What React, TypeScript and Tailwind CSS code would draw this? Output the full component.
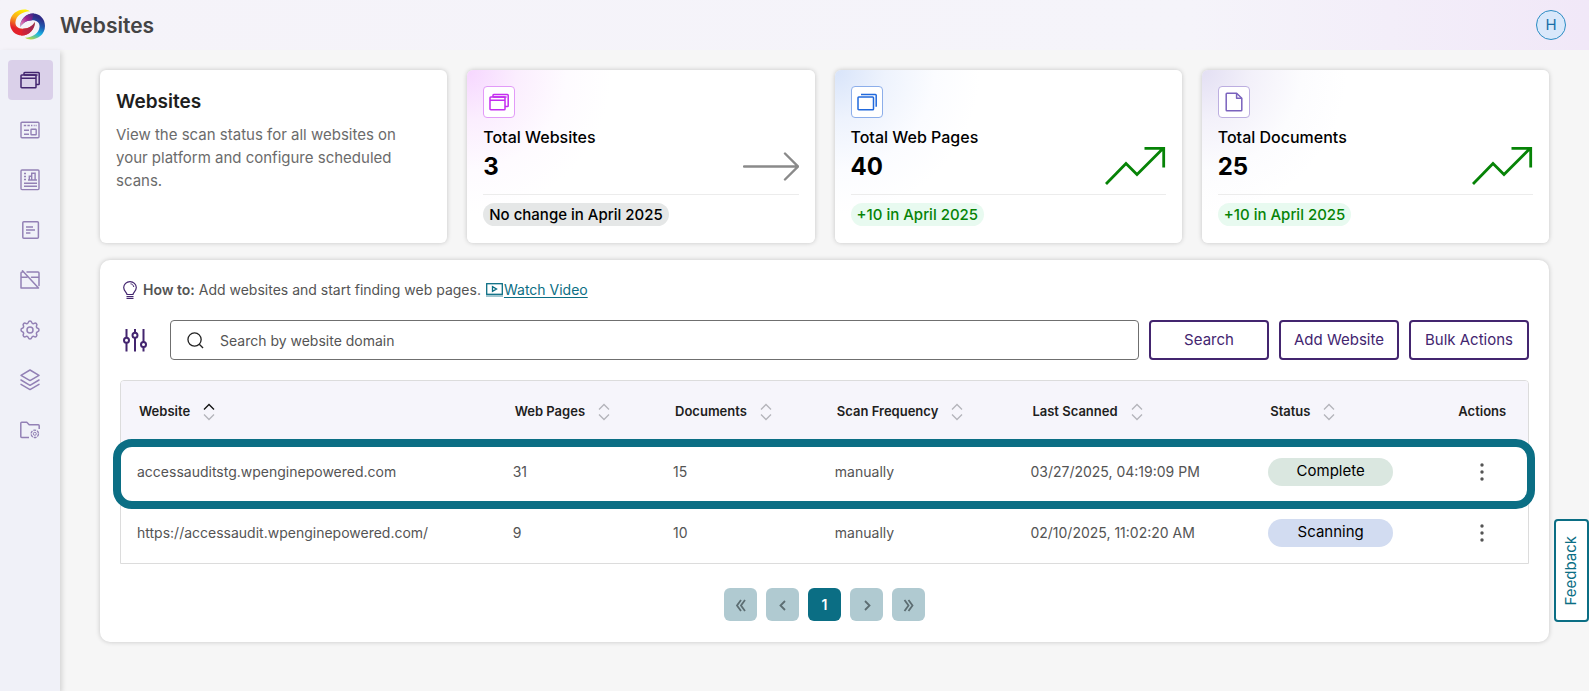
import React, { useState } from 'react';
import { TbSettings } from 'react-icons/tb';

interface IconProps {
  size?: number;
}

const WindowsIcon: React.FC<IconProps> = ({ size = 20 }) => (
  <svg width={size} height={size} viewBox="0 0 20 20" fill="none" stroke="currentColor" strokeWidth="1.5" strokeLinejoin="round">
    <rect x="1" y="5" width="15" height="12.7" rx="0.8" />
    <path d="M1 8.3h15M4 5V3.3c0-.5.3-.8.8-.8h13.6c.5 0 .8.3.8.8v10.5c0 .5-.3.8-.8.8H16M4.2 5h13.4" />
  </svg>
);

const PagesIcon: React.FC<IconProps> = ({ size = 20 }) => (
  <svg width={size} height={size} viewBox="0 0 20 20" fill="none" stroke="currentColor" strokeWidth="1.5" strokeLinejoin="round">
    <rect x="1" y="5" width="15.5" height="12.8" rx="0.8" />
    <path d="M4 2.4h14.4c.5 0 .8.3.8.8v11.6" />
  </svg>
);

const DocIcon: React.FC<IconProps> = ({ size = 20 }) => (
  <svg width={size} height={size} viewBox="0 0 20 20" fill="none" stroke="currentColor" strokeWidth="1.5" strokeLinejoin="round">
    <path d="M3 1.2h9.6l5.2 5V18c0 .4-.3.8-.8.8H3c-.5 0-.8-.4-.8-.8V2c0-.5.3-.8.8-.8z" />
    <path d="M12.6 1.2v5h5" />
  </svg>
);

const LayoutIcon = () => (
  <svg width="20" height="20" viewBox="0 0 20 20" fill="none" stroke="currentColor" strokeWidth="1.4">
    <rect x="1" y="2.2" width="18" height="15.6" rx="1" />
    <path d="M3.8 5.500h2.400M7.400 5.500h2.400M11 5.500h1.400M13.700 5.500h1M15.600 5.500h1M4 10.300h5M4 14.200h5" />
    <rect x="11" y="9.2" width="5.2" height="5.6" rx="0.5" />
  </svg>
);

const ReportIcon = () => (
  <svg width="20" height="22" viewBox="0 0 20 22" fill="none" stroke="currentColor" strokeWidth="1.4">
    <rect x="1" y="1" width="18" height="19.6" rx="1" />
    <path d="M4 4.500h2M4 7.500h2M4 10.500h2M8 11h9M9.300 11V7.300h2.400V11M11.700 11V4.300h3.400V11M4 14.200h13M4 17.200h13" />
  </svg>
);

const NoteIcon = () => (
  <svg width="20" height="20" viewBox="0 0 20 20" fill="none" stroke="currentColor" strokeWidth="1.5">
    <rect x="2.8" y="1.7" width="15.6" height="16.6" rx="1" />
    <path d="M6 7h7M6 10h9M6 13h4.400" />
  </svg>
);

const BlockedIcon = () => (
  <svg width="20" height="20" viewBox="0 0 20 20" fill="none" stroke="currentColor" strokeWidth="1.5" strokeLinejoin="round" strokeLinecap="round">
    <path d="M7 2H18c.6 0 1 .4 1 1v12.500M3.500 2H2c-.6 0-1 .4-1 1V18h17M1 7.300h6M11.500 7.300H19M2.500.8L18.500 18" />
  </svg>
);

const LayersIcon = () => (
  <svg width="20" height="22" viewBox="0 0 20 22" fill="none" stroke="currentColor" strokeWidth="1.5" strokeLinejoin="round" strokeLinecap="round">
    <path d="M10 1l9 5.300-9 5.300-9-5.300z" />
    <path d="M1 11l9 5.300 9-5.300M1 15.300l9 5.300 9-5.300" />
  </svg>
);

const FolderIcon = () => (
  <svg width="20" height="20" viewBox="0 0 20 20" fill="none" stroke="currentColor" strokeWidth="1.5" strokeLinejoin="round">
    <path d="M9 17.500H1.700c-.5 0-.9-.4-.9-.9V3.200c0-.5.4-.9.9-.9h5.100l2.400 2.500h9.100c.5 0 .9.4.9.9V9" />
    <circle cx="14.8" cy="13.8" r="3.7" strokeWidth="1.3" strokeDasharray="2.9 .97" />
    <circle cx="14.8" cy="13.8" r="1.5" strokeWidth="1" />
  </svg>
);

const Logo = () => (
  <svg width="35" height="32" viewBox="0 0 35 32" fill="none">
    <defs>
      <linearGradient id="warm" x1="20" y1="0" x2="10" y2="27" gradientUnits="userSpaceOnUse">
        <stop offset="0.1" stopColor="#fff200" />
        <stop offset="0.45" stopColor="#fba919" />
        <stop offset="0.8" stopColor="#e3222b" />
      </linearGradient>
      <linearGradient id="cool" x1="27" y1="5" x2="17" y2="31" gradientUnits="userSpaceOnUse">
        <stop offset="0.1" stopColor="#2e2a86" />
        <stop offset="0.4" stopColor="#1e5fb4" />
        <stop offset="0.65" stopColor="#18b5e4" />
        <stop offset="1" stopColor="#d9e021" />
      </linearGradient>
      <linearGradient id="plum" x1="10" y1="17" x2="25" y2="5" gradientUnits="userSpaceOnUse">
        <stop offset="0" stopColor="#f49ac1" />
        <stop offset="0.5" stopColor="#a3238e" />
        <stop offset="1" stopColor="#2e2a86" />
      </linearGradient>
      <linearGradient id="wine" x1="10" y1="26" x2="25" y2="15" gradientUnits="userSpaceOnUse">
        <stop offset="0" stopColor="#e3222b" />
        <stop offset="1" stopColor="#8e2a5e" />
      </linearGradient>
    </defs>
    <path d="M20 2.200C14-2 0 2 0 14c0 7 5 12.500 12 12.500 7 0 13-6 13-13.500-3 4.500-7 6.500-12 6.800-5 .2-8-2.800-7.500-6.800C6 7 12 2.500 20 2.200z" fill="url(#warm)" />
    <path d="M11 26.500C19 27 25 20 25 13c-3 4.500-7 6.500-12 6.800z" fill="url(#wine)" />
    <path d="M15 28.800c6 4.200 20 .2 20-11.800 0-7-5-12.500-12-12.500-7 0-13 6-13 13.500 3-4.500 7-6.500 12-6.800 5-.2 8 2.800 7.500 6.800-.5 6-6.500 10.500-14.500 10.800z" fill="url(#cool)" />
    <path d="M24 4.500C16 4 10 11 10 18c3-4.500 7-6.500 12-6.800z" fill="url(#plum)" />
  </svg>
);

const SortIcon: React.FC<{ active?: boolean }> = ({ active }) => (
  <svg width="12" height="18" viewBox="0 0 12 18" fill="none" strokeWidth="1.3">
    <path d="M1 6.500L6 1.500l5 5" stroke={active ? '#111111' : '#b4b4ba'} />
    <path d="M1 11.500l5 5 5-5" stroke="#b4b4ba" />
  </svg>
);

const FlatArrow = () => (
  <svg width="56" height="40" viewBox="0 0 56 40" fill="none" stroke="#8a8a8a" strokeWidth="2.4" strokeLinecap="round">
    <path d="M1 21.500h53M42 8.500l13 13-13 13" />
  </svg>
);

const UpArrow = () => (
  <svg width="61" height="40" viewBox="0 0 61 40" fill="none" stroke="#068306" strokeWidth="2.8">
    <path d="M1 39L21 18.500 32 29.500 58 3.500M39.500 3.300H58.700V22.500" />
  </svg>
);

const NAV = [
  { label: 'Websites', icon: <WindowsIcon /> },
  { label: 'Web pages', icon: <LayoutIcon /> },
  { label: 'Reports', icon: <ReportIcon /> },
  { label: 'Documents', icon: <NoteIcon /> },
  { label: 'Excluded pages', icon: <BlockedIcon /> },
  { label: 'Settings', icon: <TbSettings size={24} strokeWidth={1.5} /> },
  { label: 'Templates', icon: <LayersIcon /> },
  { label: 'Folder settings', icon: <FolderIcon /> },
];

const STATS = [
  {
    title: 'Total Websites',
    value: 3,
    change: 'No change in April 2025',
    up: false,
    glow: 'bg-[radial-gradient(circle_at_top_left,#f6d6ff_0%,#fbeefe_50px,#fefbff_100px,#ffffff_145px)]',
    tile: 'border-[#e29bf8] text-[#c42df0]',
    icon: <WindowsIcon />,
  },
  {
    title: 'Total Web Pages',
    value: 40,
    change: '+10 in April 2025',
    up: true,
    glow: 'bg-[radial-gradient(circle_at_top_left,#d8e4fa_0%,#eef3fd_50px,#fbfcff_100px,#ffffff_145px)]',
    tile: 'border-[#8caeea] text-[#2169dc]',
    icon: <PagesIcon />,
  },
  {
    title: 'Total Documents',
    value: 25,
    change: '+10 in April 2025',
    up: true,
    glow: 'bg-[radial-gradient(circle_at_top_left,#e3dff3_0%,#f3f1fa_50px,#fcfcfe_100px,#ffffff_145px)]',
    tile: 'border-[#bcaee0] text-[#7a62bd]',
    icon: <DocIcon />,
  },
];

const COLUMNS = [
  { label: 'Website', width: 'w-[26.7%]' },
  { label: 'Web Pages', width: 'w-[11.4%]' },
  { label: 'Documents', width: 'w-[11.5%]' },
  { label: 'Scan Frequency', width: 'w-[13.9%]' },
  { label: 'Last Scanned', width: 'w-[16.9%]' },
  { label: 'Status', width: 'w-[13.1%]' },
];

const ROWS = [
  { site: 'accessauditstg.wpenginepowered.com', pages: 31, docs: 15, freq: 'manually', scanned: '03/27/2025, 04:19:09 PM', status: 'Complete' },
  { site: 'https://accessaudit.wpenginepowered.com/', pages: 9, docs: 10, freq: 'manually', scanned: '02/10/2025, 11:02:20 AM', status: 'Scanning' },
];

const PAGER = [
  { label: 'First page', path: 'M8 2.500L4 8l4 5.500M12 2.500L8 8l4 5.500' },
  { label: 'Previous page', path: 'M10 3.500L5.500 8l4.500 4.500' },
  { label: 'Page 1', path: '' },
  { label: 'Next page', path: 'M6 3.500L10.500 8 6 12.500' },
  { label: 'Last page', path: 'M3.500 2.500l4 5.500-4 5.500M7.500 2.500l4 5.500-4 5.500' },
];

const App: React.FC = () => {
  const [query, setQuery] = useState('');

  return (
    <div className="min-h-screen flex flex-col bg-[#f6f6f6] font-['Inter',sans-serif] text-[#545454]">
      <header className="h-[50px] flex items-center justify-between pl-[10px] pr-[23px] bg-linear-to-r from-[#f5f3f9] via-[#f5f4fa] via-75% to-[#f1e8f8]">
        <div className="flex items-center gap-[15px]">
          <Logo />
          <h1 className="pt-px text-[21px] font-semibold text-[#444444]">Websites</h1>
        </div>
        <button aria-label="Account" className="w-[30px] h-[30px] rounded-full border border-[#2b8cc4] bg-[#d9e8fb] text-[#1a6fa8] text-[15px]">H</button>
      </header>

      <div className="flex flex-grow">
        <nav className="w-[60px] shrink-0 flex flex-col gap-[10px] pt-[10px] pl-2 bg-[#f0f1f8] shadow-[2px_2px_5px_rgba(0,0,0,0.14)]">
          {NAV.map((item, i) => (
            <a
              key={item.label}
              href="#"
              aria-label={item.label}
              className={`w-[45px] h-10 pr-[2px] rounded flex items-center justify-center ${i === 0 ? 'bg-[#dad0e9] text-[#43256f]' : 'text-[#9381b5]'}`}
            >
              {item.icon}
            </a>
          ))}
        </nav>

        <main className="flex-grow min-w-0 px-10 pt-5 pb-12">
          <div className="grid grid-cols-4 gap-5">
            <section className="h-[173px] rounded-md bg-white p-4 shadow-[0_0_5px_rgba(0,0,0,0.2)]">
              <h2 className="text-[19px] leading-8 font-semibold text-[#1e1e1e]">Websites</h2>
              <p className="mt-[5px] text-[15px] leading-[23px] text-[#6b6b6b]">
                View the scan status for all websites on your platform and configure scheduled scans.
              </p>
            </section>

            {STATS.map(s => (
              <section key={s.title} className={`h-[173px] rounded-md p-4 shadow-[0_0_5px_rgba(0,0,0,0.2)] ${s.glow}`}>
                <div className={`w-8 h-8 rounded border bg-white flex items-center justify-center ${s.tile}`}>{s.icon}</div>
                <div className="flex justify-between items-end pb-[9px] border-b border-[#ececec]">
                  <div className="text-black">
                    <h3 className="mt-[7px] text-[16px] leading-6 font-medium">{s.title}</h3>
                    <p className="text-[24px] leading-9 font-bold">{s.value}</p>
                  </div>
                  {s.up ? <UpArrow /> : <FlatArrow />}
                </div>
                <span className={`mt-2 inline-block rounded-full px-[6px] text-[15px] leading-[23px] font-medium ${s.up ? 'bg-[#e8faf0] text-[#068306]' : 'bg-[#e5e7e7] text-black'}`}>
                  {s.change}
                </span>
              </section>
            ))}
          </div>

          <section className="mt-[17px] rounded-[10px] bg-white px-5 pt-5 pb-[21px] shadow-[0_0_5px_rgba(0,0,0,0.2)]">
            <div className="flex items-center h-5 pl-[3px] text-[14px] leading-5">
              <svg width="14" height="18" viewBox="0 0 14 18" fill="none" stroke="#43256f" strokeWidth="1.2">
                <path d="M4 13.500c0-2-3.300-3.200-3.300-6.900a6.300 6 0 0 1 12.600 0c0 3.700-3.300 4.900-3.300 6.900zM3.500 15.500h7M3.500 17.300h7" />
                <path d="M7.500 2.800c1.800.2 3 1.400 3.300 3.200" strokeWidth="1" />
              </svg>
              <span className="ml-[6px]"><b className="font-semibold">How to:</b> Add websites and start finding web pages.</span>
              <a href="#" className="ml-[5px] flex items-center gap-px text-[#0b6e84]">
                <svg width="17" height="14" viewBox="0 0 17 14" fill="none" stroke="currentColor" strokeWidth="1.3">
                  <rect x="0.7" y="0.7" width="15.6" height="10.6" />
                  <path d="M6.500 3.700v4.600L10.500 6z" />
                  <path d="M0 13h17" strokeOpacity="0.6" />
                </svg>
                <span className="underline underline-offset-2">Watch Video</span>
              </a>
            </div>

            <form className="mt-5 flex items-center gap-[10px]" onSubmit={e => e.preventDefault()}>
              <button type="button" aria-label="Filters" className="w-10 h-10 pl-[3px]">
                <svg width="24" height="24" viewBox="0 0 24 24" fill="none" stroke="#43256f" strokeWidth="2">
                  <path d="M3.500 1v8.500M3.500 15v8.500M12 1v3.500M12 10v13.500M20.500 1v13M20.500 19v4.500" />
                  <circle cx="3.5" cy="12.3" r="2.5" />
                  <circle cx="12" cy="7.3" r="2.5" />
                  <circle cx="20.5" cy="16.5" r="2.5" />
                </svg>
              </button>
              <label className="flex-grow h-10 flex items-center rounded border border-[#6f6f6f] pl-4">
                <svg width="17" height="17" viewBox="0 0 18 18" fill="none" stroke="#222222" strokeWidth="1.4">
                  <circle cx="8" cy="8" r="7" />
                  <path d="M13 13l4 4" />
                </svg>
                <input
                  aria-label="Search by website domain"
                  value={query}
                  onChange={e => setQuery(e.target.value)}
                  placeholder="Search by website domain"
                  className="flex-grow ml-4 text-[14px] outline-none placeholder:text-[#545454]"
                />
              </label>
              {['Search', 'Add Website', 'Bulk Actions'].map(label => (
                <button key={label} type="button" className="w-[120px] h-10 shrink-0 rounded border-2 border-[#43256f] text-[15px] text-[#43256f]">
                  {label}
                </button>
              ))}
            </form>

            <div className="relative mt-5">
              <div className="rounded-t border border-[#dcdcdc] overflow-hidden">
                <table className="w-full table-fixed text-left text-[14px]">
                  <thead>
                    <tr className="h-[60px] bg-[#f6f5fb] text-[13px] text-[#1e1e1e]">
                      {COLUMNS.map((c, i) => (
                        <th key={c.label} className={`pl-[18px] pt-[2px] font-semibold ${c.width}`}>
                          <button className="flex items-center gap-[13px]">
                            {c.label}
                            <SortIcon active={i === 0} />
                          </button>
                        </th>
                      ))}
                      <th className="pt-[2px] text-center font-semibold">Actions</th>
                    </tr>
                  </thead>
                  <tbody>
                    {ROWS.map(r => (
                      <tr key={r.site} className="h-[61px]">
                        <td className="pl-4">{r.site}</td>
                        <td className="pl-4">{r.pages}</td>
                        <td className="pl-4">{r.docs}</td>
                        <td className="pl-4">{r.freq}</td>
                        <td className="pl-4">{r.scanned}</td>
                        <td className="pl-4">
                          <span className={`block w-[125px] h-7 rounded-full text-center text-[15px] leading-[26px] text-black ${r.status === 'Complete' ? 'bg-[#dae7e0]' : 'bg-[#d2dcf1]'}`}>
                            {r.status}
                          </span>
                        </td>
                        <td>
                          <button aria-label={`Actions for ${r.site}`} className="block mx-auto">
                            <svg width="6" height="20" viewBox="0 0 6 20" fill="#545454">
                              <circle cx="3" cy="3" r="1.7" />
                              <circle cx="3" cy="10" r="1.7" />
                              <circle cx="3" cy="17" r="1.7" />
                            </svg>
                          </button>
                        </td>
                      </tr>
                    ))}
                  </tbody>
                </table>
              </div>
              <div className="absolute -left-[7px] -right-[6px] top-[59px] h-[70px] rounded-[19px] border-8 border-[#0b6e84] pointer-events-none" />
            </div>

            <div className="mt-6 flex justify-center gap-[9px]">
              {PAGER.map(p => (
                <button
                  key={p.label}
                  aria-label={p.label}
                  className={`w-[33px] h-[33px] rounded-md flex items-center justify-center text-[14px] font-semibold ${p.path ? 'bg-[#b0cad1] text-[#5c6d72]' : 'bg-[#0b6e84] text-white'}`}
                >
                  {p.path ? (
                    <svg width="16" height="16" viewBox="0 0 16 15" fill="none" stroke="currentColor" strokeWidth="1.8">
                      <path d={p.path} />
                    </svg>
                  ) : (
                    '1'
                  )}
                </button>
              ))}
            </div>
          </section>
        </main>
      </div>

      <button className="fixed right-0 top-[519px] w-[35px] h-[103px] rounded border-2 border-[#0b6e84] bg-white text-[15px] text-[#0b6e84] flex items-center justify-center">
        <span className="[writing-mode:vertical-rl] rotate-180">Feedback</span>
      </button>
    </div>
  );
};

export default App;
